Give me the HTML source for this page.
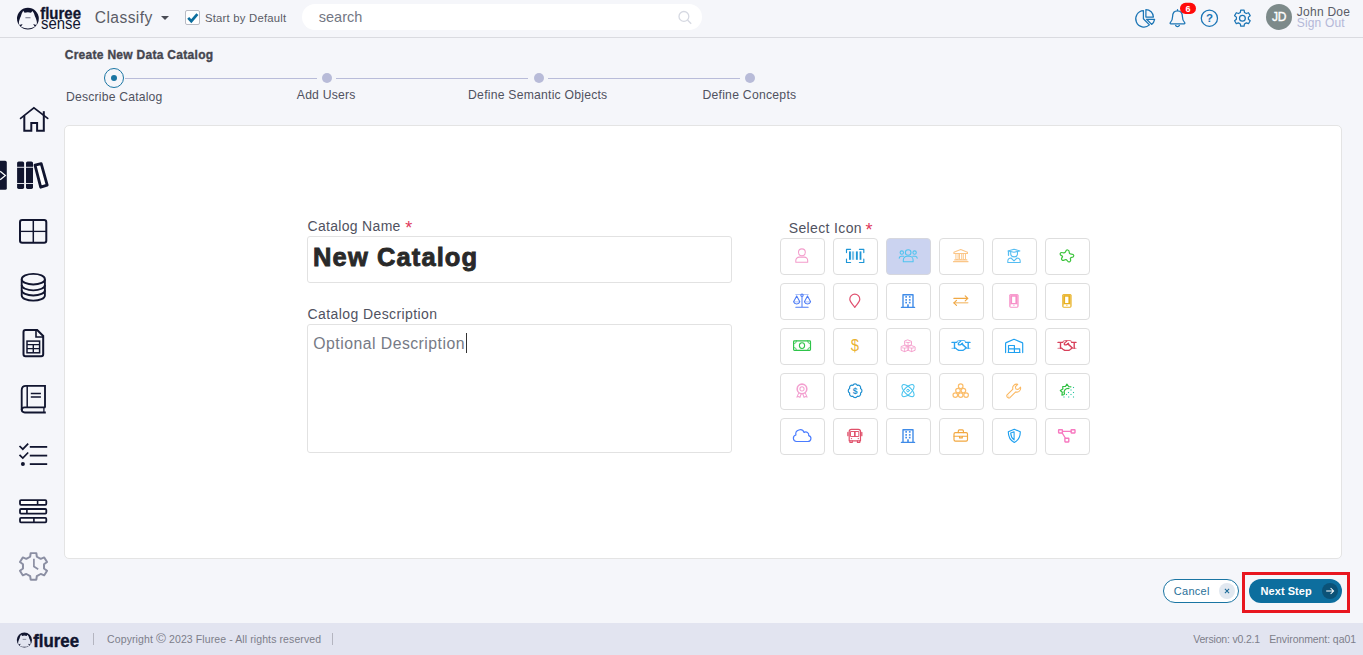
<!DOCTYPE html>
<html lang="en">
<head>
<meta charset="utf-8">
<title>Create New Data Catalog</title>
<style>
*{box-sizing:border-box;margin:0;padding:0}
html,body{width:1363px;height:655px;overflow:hidden}
body{background:#f5f6fa;font-family:"Liberation Sans",sans-serif;color:#50525f;position:relative}
.t{position:absolute;white-space:nowrap;line-height:1}
#header{position:absolute;left:0;top:0;width:1363px;height:38px;border-bottom:1px solid #dadbe0}
#footer{position:absolute;left:0;top:623px;width:1363px;height:32px;background:#e2e4f0}
#card{position:absolute;left:64px;top:125px;width:1278px;height:434px;background:#fff;border:1px solid #e4e4e4;border-radius:5px}
.inp{position:absolute;background:#fff;border:1px solid #e2e2e2;border-radius:3px}
.ic{position:absolute;width:45px;height:37px;border:1px solid #dedede;border-radius:4px;background:#fff}
.ic.sel{background:#cbd3f0;border-color:#d6d7de}
svg{position:absolute;overflow:visible}
.line{position:absolute;height:1px;background:#b9bcd9;top:78px}
.dot{position:absolute;width:10px;height:10px;border-radius:50%;background:#b8bbd8;top:73px}
</style>
</head>
<body>

<div id="header"></div>
<svg style="left:0;top:0;width:1363px;height:655px;pointer-events:none" viewBox="0 0 1363 655"><circle cx="27.9" cy="18.6" r="10.9" fill="#11152f"/><path d="M23.20 10.70 L24.60 12.70 Q27.90 11.90 31.00 12.70 L32.40 10.90 C33.80 12.60 34.50 14.40 34.90 16.30 C35.90 18.40 36.80 20.60 36.90 22.50 C36.90 23.60 36.70 24.40 36.30 25.00 L33.20 24.00 L34.80 26.70 Q27.90 30.10 21.00 26.70 L22.60 24.00 L19.50 25.00 C19.10 24.40 18.90 23.60 18.90 22.50 C19.00 20.60 19.90 18.40 20.90 16.30 C21.30 14.40 22.00 12.60 23.20 10.70Z" fill="#f5f6fa"/><path d="M25.40 17.70 H30.50" stroke="#11152f" stroke-width="1.20" opacity=".5"/><text transform="translate(40.2 18.5) scale(1 1.04)" textLength="40.8" lengthAdjust="spacingAndGlyphs" font-family="Liberation Sans, sans-serif" font-weight="700" font-size="15.6" fill="#11152f" stroke="#11152f" stroke-width=".3">fluree</text><text x="41" y="28.7" textLength="39.7" lengthAdjust="spacingAndGlyphs" font-family="Liberation Sans, sans-serif" font-size="17.2" fill="#11152f">sense</text></svg>
<div class="t" style="left:94.80px;top:10.29px;font-size:15.6px;letter-spacing:0.41px;font-weight:400;color:#5a5c66;">Classify</div>
<div style="position:absolute;left:161px;top:16px;width:0;height:0;border-left:4px solid transparent;border-right:4px solid transparent;border-top:4.5px solid #4a4c55"></div>
<div style="position:absolute;left:185px;top:10px;width:15px;height:15px;background:#fff;border:1px solid #b9bbc4;border-radius:2px"></div>
<svg style="left:187px;top:12px;width:11px;height:11px" viewBox="0 0 11 11"><path d="M1.2 5.9 L4.3 9.2 L10.4 2.2" fill="none" stroke="#0d6e9e" stroke-width="2.7"/></svg>
<div class="t" style="left:204.90px;top:13.13px;font-size:11.3px;letter-spacing:0.23px;font-weight:400;color:#5a5c66;">Start by Default</div>
<div style="position:absolute;left:302px;top:4px;width:400px;height:26px;border-radius:13px;background:#fff"></div>
<div class="t" style="left:318.80px;top:10.33px;font-size:14.5px;letter-spacing:0px;font-weight:400;color:#737784;">search</div>
<svg style="left:676px;top:9px;width:18px;height:18px" viewBox="0 0 18 18"><circle cx="7.9" cy="7.4" r="4.9" fill="none" stroke="#d6d9e2" stroke-width="1.3"/><path d="M11.5 11 L15.2 14.7" stroke="#d6d9e2" stroke-width="1.3" fill="none"/></svg>
<svg style="left:0;top:0;width:1363px;height:655px;pointer-events:none" viewBox="0 0 1363 655"><path d="M1143.4 10.6 A8.2 8.2 0 1 0 1149.4 24.9 L1143.4 18.8 Z" fill="none" stroke="#1b75b5" stroke-width="1.25" stroke-linejoin="round" stroke-linecap="round"/><path d="M1145.9 9.6 V17 H1153.4 A7.6 7.6 0 0 0 1145.9 9.6Z" fill="none" stroke="#1b75b5" stroke-width="1.25" stroke-linejoin="round" stroke-linecap="round"/><path d="M1146.6 19.3 H1154.6 A8 8 0 0 1 1151.6 24.4 Z" fill="none" stroke="#1b75b5" stroke-width="1.25" stroke-linejoin="round" stroke-linecap="round"/><path d="M1177.5 9.6 V10.8 M1177.5 10.8 C1173.8 10.8 1172.6 13.6 1172.6 16.6 C1172.6 20.2 1171.3 21.6 1170.3 22.6 C1169.8 23.2 1170.2 23.9 1170.9 23.9 H1184.1 C1184.8 23.9 1185.2 23.2 1184.7 22.6 C1183.7 21.6 1182.4 20.2 1182.4 16.6 C1182.4 13.6 1181.2 10.8 1177.5 10.8Z" fill="none" stroke="#1b75b5" stroke-width="1.25" stroke-linejoin="round" stroke-linecap="round"/><path d="M1175.6 25.3 A2 2 0 0 0 1179.4 25.3" fill="none" stroke="#1b75b5" stroke-width="1.25" stroke-linejoin="round" stroke-linecap="round"/><rect x="1180" y="2.8" width="16" height="11.2" rx="5.6" fill="#ff0a0a"/><text x="1188" y="11.6" text-anchor="middle" font-family="Liberation Sans, sans-serif" font-weight="700" font-size="9" fill="#fff">6</text><circle cx="1209.4" cy="18.2" r="8.1" fill="none" stroke="#1b75b5" stroke-width="1.25" stroke-linejoin="round" stroke-linecap="round"/><text x="1209.4" y="22.4" text-anchor="middle" font-family="Liberation Sans, sans-serif" font-weight="700" font-size="11.5" fill="#1b75b5">?</text><path d="M1240.33 12.46 L1240.70 10.18 L1244.10 10.18 L1244.47 12.46 L1246.34 13.54 L1248.49 12.71 L1250.20 15.67 L1248.40 17.12 L1248.40 19.28 L1250.20 20.73 L1248.49 23.69 L1246.34 22.86 L1244.47 23.94 L1244.10 26.22 L1240.70 26.22 L1240.33 23.94 L1238.46 22.86 L1236.31 23.69 L1234.60 20.73 L1236.40 19.28 L1236.40 17.12 L1234.60 15.67 L1236.31 12.71 L1238.46 13.54Z" fill="none" stroke="#1b75b5" stroke-width="1.25" stroke-linejoin="round" stroke-linecap="round"/><circle cx="1242.4" cy="18.2" r="2.9" fill="none" stroke="#1b75b5" stroke-width="1.25" stroke-linejoin="round" stroke-linecap="round"/><circle cx="1279" cy="16.9" r="13" fill="#7d8a8a"/><text x="1279.1" y="20.8" text-anchor="middle" font-family="Liberation Sans, sans-serif" font-size="12" fill="#fff" stroke="#fff" stroke-width=".35" letter-spacing="-0.2">JD</text></svg>
<div class="t" style="left:1296.80px;top:5.64px;font-size:12px;letter-spacing:0.246px;font-weight:400;color:#5a5c66;">John Doe</div>
<div class="t" style="left:1296.80px;top:16.84px;font-size:12px;letter-spacing:0.157px;font-weight:400;color:#b4b8d8;">Sign Out</div>
<svg style="left:0;top:0;width:1363px;height:655px;pointer-events:none" viewBox="0 0 1363 655"><path d="M20.6 118.4 L33.9 107.9 L47.7 118.4" fill="none" stroke="#11152f" stroke-width="1.7" stroke-linecap="round"/><path d="M43.8 111.2 V116" fill="none" stroke="#11152f" stroke-width="2.0" stroke-linejoin="miter"/><path d="M24.3 115.6 V130.7 H31.3 V123 H37.1 V130.7 H43.8 V115.4" fill="none" stroke="#11152f" stroke-width="2.0" stroke-linejoin="miter"/><path d="M0 160.8 H5.2 Q6.8 160.8 6.8 162.4 V188.2 Q6.8 189.8 5.2 189.8 H0Z" fill="#11152f"/><path d="M0.2 171.3 L5.4 175.5 L0.2 179.7" fill="none" stroke="#fff" stroke-width="1.2"/><rect x="17.1" y="161.4" width="7" height="27.5" rx="1.6" fill="#11152f"/><rect x="16.900000000000002" y="166.8" width="7.4" height="0.9" fill="#f5f6fa"/><rect x="16.900000000000002" y="183" width="7.4" height="0.9" fill="#f5f6fa"/><rect x="26.0" y="161.4" width="7" height="27.5" rx="1.6" fill="#11152f"/><rect x="25.8" y="166.8" width="7.4" height="0.9" fill="#f5f6fa"/><rect x="25.8" y="183" width="7.4" height="0.9" fill="#f5f6fa"/><path d="M35.0 165.2 L41.2 163.7 L47.2 185.2 L40.7 187.2 Z" fill="#fff" stroke="#11152f" stroke-width="2.8" stroke-linejoin="round"/><rect x="20" y="220.1" width="26.3" height="22.6" rx="2.2" fill="none" stroke="#11152f" stroke-width="2.0" stroke-linejoin="miter"/><path d="M33.3 220.1 V242.7" fill="none" stroke="#11152f" stroke-width="1.5"/><path d="M20 231.4 H46.3" fill="none" stroke="#11152f" stroke-width="1.3"/><ellipse cx="33.3" cy="279.2" rx="11.6" ry="5.3" fill="none" stroke="#11152f" stroke-width="1.85"/><path d="M21.7 279.2 V295.4 A11.6 5.3 0 0 0 44.9 295.4 V279.2" fill="none" stroke="#11152f" stroke-width="1.85"/><path d="M21.7 285 A11.6 5.3 0 0 0 44.9 285" fill="none" stroke="#11152f" stroke-width="1.85"/><path d="M21.7 290.2 A11.6 5.3 0 0 0 44.9 290.2" fill="none" stroke="#11152f" stroke-width="1.85"/><path d="M25.5 330 H37.2 L43.2 336 V354.3 Q43.2 356.3 41.2 356.3 H25.5 Q23.5 356.3 23.5 354.3 V332 Q23.5 330 25.5 330Z" fill="none" stroke="#11152f" stroke-width="2.0" stroke-linejoin="miter"/><path d="M36 330 V337 H43.2" fill="none" stroke="#11152f" stroke-width="1.6"/><rect x="27" y="341.1" width="12.6" height="11.7" fill="none" stroke="#11152f" stroke-width="1.5"/><path d="M27 344.6 H39.6 M27 348.6 H39.6 M33.3 344.6 V352.8" fill="none" stroke="#11152f" stroke-width="1.4"/><path d="M45 407.4 V385.9 H26 Q21.7 385.9 21.7 390.2 V409.6 Q21.7 412.5 24.8 412.5 H45.8" fill="none" stroke="#11152f" stroke-width="1.85"/><path d="M45.4 407.4 H24.6 Q21.7 407.4 21.7 409.9" fill="none" stroke="#11152f" stroke-width="1.85"/><path d="M27.2 385.9 V407.4" fill="none" stroke="#11152f" stroke-width="1.5"/><path d="M43.9 407.4 V412.5" fill="none" stroke="#11152f" stroke-width="1.3"/><path d="M30.8 393.5 H40.9 M30.8 396.9 H40.9" fill="none" stroke="#11152f" stroke-width="1.5"/><path d="M19.5 446.0 L22.8 449.2 L28.2 443.7" fill="none" stroke="#11152f" stroke-width="1.7"/><path d="M19.5 454.8 L22.8 458.0 L28.2 452.5" fill="none" stroke="#11152f" stroke-width="1.7"/><path d="M29.8 446.9 H47.2" fill="none" stroke="#11152f" stroke-width="1.8"/><path d="M29.8 455.6 H47.2" fill="none" stroke="#11152f" stroke-width="1.8"/><path d="M29.8 464.1 H47.2" fill="none" stroke="#11152f" stroke-width="1.8"/><circle cx="22.9" cy="464.1" r="2" fill="#11152f"/><rect x="20" y="500.1" width="26.3" height="4.7" rx="1" fill="#fff" stroke="#11152f" stroke-width="1.8"/><path d="M37.6 500.1 V504.8" stroke="#11152f" stroke-width="1.6"/><rect x="20" y="509" width="26.3" height="4.6" rx="1" fill="#fff" stroke="#11152f" stroke-width="1.8"/><path d="M26.9 509 V513.6" stroke="#11152f" stroke-width="1.6"/><rect x="20" y="517.9" width="26.3" height="4.4" rx="1" fill="#fff" stroke="#11152f" stroke-width="1.8"/><path d="M33.9 517.9 V522.3" stroke="#11152f" stroke-width="1.6"/><path transform="translate(33.5 566.4) scale(1.055 1) translate(-33.5 -566.4)" d="M30.35 556.70 L30.82 553.12 L36.18 553.12 L36.65 556.70 L40.33 558.82 L43.66 557.44 L46.34 562.08 L43.48 564.28 L43.48 568.52 L46.34 570.72 L43.66 575.36 L40.33 573.98 L36.65 576.10 L36.18 579.68 L30.82 579.68 L30.35 576.10 L26.67 573.98 L23.34 575.36 L20.66 570.72 L23.52 568.52 L23.52 564.28 L20.66 562.08 L23.34 557.44 L26.67 558.82Z" fill="none" stroke="#8b8fa3" stroke-width="1.9" stroke-linejoin="round"/><path d="M33.9 558.8 V566.5 L38.2 569.3" fill="none" stroke="#8b8fa3" stroke-width="1.7"/></svg>
<div class="t" style="left:64.70px;top:48.84px;font-size:12px;letter-spacing:0.29px;font-weight:700;color:#45464f;-webkit-text-stroke:0.35px #45464f;">Create New Data Catalog</div>
<div style="position:absolute;left:104px;top:68px;width:20px;height:20px;border-radius:50%;border:1.8px solid #1a75a3"></div>
<div style="position:absolute;left:111px;top:75px;width:6px;height:6px;border-radius:50%;background:#1a75a3"></div>
<div class="line" style="left:125px;width:192px"></div>
<div class="line" style="left:336px;width:192px"></div>
<div class="line" style="left:548px;width:192px"></div>
<div class="dot" style="left:322px"></div>
<div class="dot" style="left:534px"></div>
<div class="dot" style="left:745px"></div>
<div class="t" style="left:66.00px;top:91.17px;font-size:12.2px;letter-spacing:0.19px;font-weight:400;color:#50525f;">Describe Catalog</div>
<div class="t" style="left:296.80px;top:89.17px;font-size:12.2px;letter-spacing:0.21px;font-weight:400;color:#50525f;">Add Users</div>
<div class="t" style="left:468.10px;top:89.17px;font-size:12.2px;letter-spacing:0.227px;font-weight:400;color:#50525f;">Define Semantic Objects</div>
<div class="t" style="left:702.40px;top:89.17px;font-size:12.2px;letter-spacing:0.26px;font-weight:400;color:#50525f;">Define Concepts</div>
<div id="card"></div>
<div class="t" style="left:307.50px;top:218.65px;font-size:14px;letter-spacing:0.31px;font-weight:400;color:#50525f;">Catalog Name</div>
<div class="t" style="left:405.20px;top:219.36px;font-size:18px;letter-spacing:0px;font-weight:400;color:#e0395c;">*</div>
<div class="inp" style="left:307px;top:236px;width:425px;height:47px"></div>
<div class="t" style="left:313.10px;top:245.21px;font-size:25.5px;letter-spacing:1.1px;font-weight:700;color:#292929;-webkit-text-stroke:0.85px #292929;">New Catalog</div>
<div class="t" style="left:307.50px;top:306.95px;font-size:14px;letter-spacing:0.41px;font-weight:400;color:#50525f;">Catalog Description</div>
<div class="inp" style="left:307px;top:324px;width:425px;height:129px"></div>
<div class="t" style="left:313.30px;top:335.83px;font-size:15.8px;letter-spacing:0.47px;font-weight:400;color:#767a85;">Optional Description</div>
<div style="position:absolute;left:466px;top:333px;width:1px;height:20px;background:#333"></div>
<div class="t" style="left:788.70px;top:221.25px;font-size:14px;letter-spacing:0.37px;font-weight:400;color:#50525f;">Select Icon</div>
<div class="t" style="left:865.60px;top:221.46px;font-size:18px;letter-spacing:0px;font-weight:400;color:#e0395c;">*</div>
<div class="ic" style="left:780px;top:238px"></div>
<svg style="left:780px;top:238px;width:45px;height:37px" viewBox="-22.5 -18.5 45 37"><circle cx="-0.6" cy="-4.2" r="3.4" fill="none" stroke="#f39ccb" stroke-width="1.06" stroke-linecap="round" stroke-linejoin="round" /><path d="M-6.7 5.7 V4 A3.4 3.4 0 0 1 -3.3 0.6 H1.8 A3.4 3.4 0 0 1 5.2 4 V5.7 Z" fill="none" stroke="#f39ccb" stroke-width="1.06" stroke-linecap="round" stroke-linejoin="round" /></svg>
<div class="ic" style="left:833px;top:238px"></div>
<svg style="left:833px;top:238px;width:45px;height:37px" viewBox="-22.5 -18.5 45 37"><path d="M-9 -3.9 V-7.2 H-4.9 M3.9 -7.2 H8.3 V-3.9 M8.3 2.7 V6 H3.9 M-4.9 6 H-9 V2.7" fill="none" stroke="#1e96d6" stroke-width="1.17" stroke-linecap="round" stroke-linejoin="round" /><rect x="-6.5" y="-5.1" width="1.9" height="8.4" fill="#1e96d6"/><rect x="-3.6" y="-5.1" width="0.8" height="8.4" fill="#1e96d6" opacity=".8"/><rect x="-2.2" y="-5.1" width="0.8" height="8.4" fill="#1e96d6" opacity=".8"/><rect x="0.4" y="-5.1" width="1.9" height="8.4" fill="#1e96d6"/><rect x="4.1" y="-5.1" width="1.8" height="8.4" fill="#1e96d6"/></svg>
<div class="ic sel" style="left:886px;top:238px"></div>
<svg style="left:886px;top:238px;width:45px;height:37px" viewBox="-22.5 -18.5 45 37"><circle cx="-0.3" cy="-4" r="2.8" fill="none" stroke="#4fc4ef" stroke-width="1.06" stroke-linecap="round" stroke-linejoin="round" /><circle cx="-6.7" cy="-3.9" r="1.7" fill="none" stroke="#4fc4ef" stroke-width="1.06" stroke-linecap="round" stroke-linejoin="round" /><circle cx="6.1" cy="-3.9" r="1.7" fill="none" stroke="#4fc4ef" stroke-width="1.06" stroke-linecap="round" stroke-linejoin="round" /><path d="M-5.2 5.2 V3.6 A3.8 3.8 0 0 1 -1.4 -0.2 H0.8 A3.8 3.8 0 0 1 4.6 3.6 V5.2 Z" fill="none" stroke="#4fc4ef" stroke-width="1.06" stroke-linecap="round" stroke-linejoin="round" /><path d="M-9.3 1.6 A2 2 0 0 1 -7.4 -0.3 H-4.8 M8.7 1.6 A2 2 0 0 0 6.8 -0.3 H4.2" fill="none" stroke="#4fc4ef" stroke-width="1.06" stroke-linecap="round" stroke-linejoin="round" /></svg>
<div class="ic" style="left:939px;top:238px"></div>
<svg style="left:939px;top:238px;width:45px;height:37px" viewBox="-22.5 -18.5 45 37"><path d="M-0.8 -7 L6 -4.2 V-3 H-7.6 V-4.2 Z" fill="none" stroke="#fbc688" stroke-width="1.06" stroke-linecap="round" stroke-linejoin="round" /><rect x="-5.2" y="-3" width="1.8" height="6" fill="none" stroke="#fbc688" stroke-width="0.95" stroke-linecap="round" stroke-linejoin="round" /><rect x="-1.6" y="-3" width="1.8" height="6" fill="none" stroke="#fbc688" stroke-width="0.95" stroke-linecap="round" stroke-linejoin="round" /><rect x="2.2" y="-3" width="1.8" height="6" fill="none" stroke="#fbc688" stroke-width="0.95" stroke-linecap="round" stroke-linejoin="round" /><path d="M-6.8 3.4 H5.4 M-8 5.2 H6.5" fill="none" stroke="#fbc688" stroke-width="1.17" stroke-linecap="round" stroke-linejoin="round" /></svg>
<div class="ic" style="left:992px;top:238px"></div>
<svg style="left:992px;top:238px;width:45px;height:37px" viewBox="-22.5 -18.5 45 37"><path d="M-6.5 -5.6 L-0.5 -7.3 L5.4 -5.6 L-0.5 -4.2 Z" fill="none" stroke="#55bdf2" stroke-width="1.06" stroke-linecap="round" stroke-linejoin="round"  fill="#55bdf2" fill-opacity=".25"/><path d="M-6 -5.4 V-1.2" fill="none" stroke="#55bdf2" stroke-width="1.27" stroke-linecap="round" stroke-linejoin="round" /><path d="M-3.8 -4.6 V-3 A3.4 3.4 0 0 0 3 -3 V-4.6" fill="none" stroke="#55bdf2" stroke-width="1.06" stroke-linecap="round" stroke-linejoin="round" /><path d="M-6.7 6 V4.6 A3.2 3.2 0 0 1 -3.5 1.5 L-0.5 4.4 L2.5 1.5 A3.2 3.2 0 0 1 5.7 4.6 V6 Z" fill="none" stroke="#55bdf2" stroke-width="1.06" stroke-linecap="round" stroke-linejoin="round" /></svg>
<div class="ic" style="left:1045px;top:238px"></div>
<svg style="left:1045px;top:238px;width:45px;height:37px" viewBox="-22.5 -18.5 45 37"><path d="M-1.85 -4.95 Q-1.24 -6.79 0.24 -6.54 Q1.72 -6.29 1.71 -4.37 Q1.70 -2.45 3.93 -2.43 Q6.16 -2.42 6.27 -0.92 Q6.38 0.58 4.36 0.87 Q2.34 1.17 2.98 2.83 Q3.63 4.49 2.32 5.22 Q1.01 5.94 -0.15 4.21 Q-1.31 2.48 -2.99 3.50 Q-4.66 4.53 -5.58 3.34 Q-6.51 2.16 -5.38 1.04 Q-4.26 -0.08 -6.04 -0.90 Q-7.83 -1.72 -7.25 -3.10 Q-6.67 -4.49 -4.57 -3.80 Q-2.46 -3.12 -1.85 -4.95 Z" fill="none" stroke="#3cc43c" stroke-width="1.17" stroke-linecap="round" stroke-linejoin="round" /></svg>
<div class="ic" style="left:780px;top:283px"></div>
<svg style="left:780px;top:283px;width:45px;height:37px" viewBox="-22.5 -18.5 45 37"><path d="M-6.7 -7 H5.7" fill="none" stroke="#4d7cf5" stroke-width="1.06" stroke-linecap="round" stroke-linejoin="round"  opacity=".45"/><circle cx="-0.5" cy="-6.3" r="1.2" fill="none" stroke="#4d7cf5" stroke-width="1.06" stroke-linecap="round" stroke-linejoin="round" /><path d="M-0.5 -5 V5.6 M-6.7 5.7 H5.7" fill="none" stroke="#4d7cf5" stroke-width="1.01" stroke-linecap="round" stroke-linejoin="round" /><path d="M-5.8 -5.6 L-8.9 0.2 A3.2 3 0 0 0 -2.6999999999999997 0.2 Z" fill="none" stroke="#4d7cf5" stroke-width="1.06" stroke-linecap="round" stroke-linejoin="round" /><path d="M-8.9 0.4 H-2.6999999999999997" fill="none" stroke="#4d7cf5" stroke-width="0.95" stroke-linecap="round" stroke-linejoin="round"  opacity=".5"/><path d="M5.0 -5.6 L1.9 0.2 A3.2 3 0 0 0 8.1 0.2 Z" fill="none" stroke="#4d7cf5" stroke-width="1.06" stroke-linecap="round" stroke-linejoin="round" /><path d="M1.9 0.4 H8.1" fill="none" stroke="#4d7cf5" stroke-width="0.95" stroke-linecap="round" stroke-linejoin="round"  opacity=".5"/></svg>
<div class="ic" style="left:833px;top:283px"></div>
<svg style="left:833px;top:283px;width:45px;height:37px" viewBox="-22.5 -18.5 45 37"><path d="M-0.7 6 C-2.8 2.8 -5.7 0.6 -5.7 -2.3 A5 5 0 0 1 4.3 -2.3 C4.3 0.6 1.4 2.8 -0.7 6 Z" fill="none" stroke="#e0506f" stroke-width="1.17" stroke-linecap="round" stroke-linejoin="round" /></svg>
<div class="ic" style="left:886px;top:283px"></div>
<svg style="left:886px;top:283px;width:45px;height:37px" viewBox="-22.5 -18.5 45 37"><path d="M-5.5 5.9 V-6.8 H4.5 V5.9" fill="none" stroke="#3f8be8" stroke-width="1.38" stroke-linecap="round" stroke-linejoin="round" /><path d="M-7.1 5.9 H6.1" fill="none" stroke="#3f8be8" stroke-width="1.27" stroke-linecap="round" stroke-linejoin="round" /><rect x="-3.2" y="-5.3999999999999995" width="1.7" height="1.6" fill="#3f8be8"/><rect x="-3.2" y="-2.4000000000000004" width="1.7" height="1.6" fill="#3f8be8"/><rect x="-3.2" y="0.30000000000000004" width="1.7" height="1.6" fill="#3f8be8"/><rect x="0.3999999999999999" y="-5.3999999999999995" width="1.7" height="1.6" fill="#3f8be8"/><rect x="0.3999999999999999" y="-2.4000000000000004" width="1.7" height="1.6" fill="#3f8be8"/><rect x="0.3999999999999999" y="0.30000000000000004" width="1.7" height="1.6" fill="#3f8be8"/><rect x="-1.3" y="2.8" width="1.6" height="3.1" fill="#3f8be8"/></svg>
<div class="ic" style="left:939px;top:283px"></div>
<svg style="left:939px;top:283px;width:45px;height:37px" viewBox="-22.5 -18.5 45 37"><path d="M-7.6 -3.1 H6.3 M3.7 -5.6 L6.3 -3.1 L3.7 -0.6" fill="none" stroke="#f0a844" stroke-width="1.17" stroke-linecap="round" stroke-linejoin="round" /><path d="M6.3 1.3 H-7.6" fill="none" stroke="#f0a844" stroke-width="1.38" stroke-linecap="round" stroke-linejoin="round"  opacity=".6"/><path d="M-5 -1.2 L-7.6 1.3 L-5 3.8" fill="none" stroke="#f0a844" stroke-width="1.17" stroke-linecap="round" stroke-linejoin="round" /></svg>
<div class="ic" style="left:992px;top:283px"></div>
<svg style="left:992px;top:283px;width:45px;height:37px" viewBox="-22.5 -18.5 45 37"><rect x="-5.3" y="-7.5" width="9.4" height="13.7" rx="1.6" fill="#f78fc8"/><rect x="-2.4" y="-4.8" width="3.3" height="6.3" fill="#fff"/><rect x="-3.9" y="2.7" width="6.6" height="2.5" rx=".5" fill="#fff"/><rect x="-4.3" y="-6.5" width="7.4" height="11.7" rx="1" fill="none" stroke="#fff" stroke-width=".35" opacity=".7"/><circle cx="-0.6" cy="3.7" r=".6" fill="#f78fc8"/></svg>
<div class="ic" style="left:1045px;top:283px"></div>
<svg style="left:1045px;top:283px;width:45px;height:37px" viewBox="-22.5 -18.5 45 37"><rect x="-5.3" y="-7.5" width="9.4" height="13.7" rx="1.6" fill="#e8b020"/><rect x="-2.4" y="-4.8" width="3.3" height="6.3" fill="#fff"/><rect x="-3.9" y="2.7" width="6.6" height="2.5" rx=".5" fill="#fff"/><rect x="-4.3" y="-6.5" width="7.4" height="11.7" rx="1" fill="none" stroke="#fff" stroke-width=".35" opacity=".7"/><circle cx="-0.6" cy="3.7" r=".6" fill="#e8b020"/></svg>
<div class="ic" style="left:780px;top:328px"></div>
<svg style="left:780px;top:328px;width:45px;height:37px" viewBox="-22.5 -18.5 45 37"><rect x="-8.9" y="-5.7" width="16.9" height="9.5" rx=".9" fill="none" stroke="#2ec44a" stroke-width="1.17" stroke-linecap="round" stroke-linejoin="round" /><ellipse cx="-0.5" cy="-0.9" rx="2.6" ry="2.9" fill="none" stroke="#2ec44a" stroke-width="1.11" stroke-linecap="round" stroke-linejoin="round" /><path d="M-5.9 -5.7 A3 3 0 0 1 -8.9 -2.7 M5 -5.7 A3 3 0 0 0 8 -2.7 M-8.9 0.8 A3 3 0 0 1 -5.9 3.8 M8 0.8 A3 3 0 0 0 5 3.8" fill="none" stroke="#2ec44a" stroke-width="0.8" stroke-linecap="round" stroke-linejoin="round" /></svg>
<div class="ic" style="left:833px;top:328px"></div>
<svg style="left:833px;top:328px;width:45px;height:37px" viewBox="-22.5 -18.5 45 37"><text x="-0.6" y="4.5" text-anchor="middle" font-family="Liberation Sans, sans-serif" font-size="16.5" fill="#e8ac1c" fill-opacity=".92" transform="translate(-0.6 0) scale(.9 1) translate(0.6 0)">$</text></svg>
<div class="ic" style="left:886px;top:328px"></div>
<svg style="left:886px;top:328px;width:45px;height:37px" viewBox="-22.5 -18.5 45 37"><path d="M-0.45 -6.5 L3.0 -5.2 V-1.8 L-0.45 -0.5 L-3.9000000000000004 -1.8 V-5.2 Z" fill="none" stroke="#f49ac9" stroke-width="0.9" stroke-linecap="round" stroke-linejoin="round" /><path d="M-2.6000000000000005 -4.3 L-0.45 -3.9 L1.7 -4.3 M-0.45 -3.9 V-0.5" fill="none" stroke="#f49ac9" stroke-width="0.8" stroke-linecap="round" stroke-linejoin="round" /><path d="M-3.9 -0.8999999999999999 L-0.44999999999999973 0.40000000000000013 V3.8 L-3.9 5.1 L-7.35 3.8 V0.40000000000000013 Z" fill="none" stroke="#f49ac9" stroke-width="0.9" stroke-linecap="round" stroke-linejoin="round" /><path d="M-6.05 1.3000000000000003 L-3.9 1.7000000000000002 L-1.7499999999999998 1.3000000000000003 M-3.9 1.7000000000000002 V5.1" fill="none" stroke="#f49ac9" stroke-width="0.8" stroke-linecap="round" stroke-linejoin="round" /><path d="M3.15 -0.8999999999999999 L6.6 0.40000000000000013 V3.8 L3.15 5.1 L-0.30000000000000027 3.8 V0.40000000000000013 Z" fill="none" stroke="#f49ac9" stroke-width="0.9" stroke-linecap="round" stroke-linejoin="round" /><path d="M0.9999999999999998 1.3000000000000003 L3.15 1.7000000000000002 L5.3 1.3000000000000003 M3.15 1.7000000000000002 V5.1" fill="none" stroke="#f49ac9" stroke-width="0.8" stroke-linecap="round" stroke-linejoin="round" /></svg>
<div class="ic" style="left:939px;top:328px"></div>
<svg style="left:939px;top:328px;width:45px;height:37px" viewBox="-22.5 -18.5 45 37"><path d="M-9.5 -4.1 H-4.9 M-7 -4.1 V1.8 M4.3 -4.1 H8.5 M6.7 -4.1 V1.8" fill="none" stroke="#2aa3f0" stroke-width="1.38" stroke-linecap="round" stroke-linejoin="round" /><path d="M-9.5 1.8 H-6 M5.5 1.8 H8.5" fill="none" stroke="#2aa3f0" stroke-width="1.27" stroke-linecap="round" stroke-linejoin="round"  opacity=".55"/><path d="M-4.9 -4.1 L-3.6 -5.6 Q-3 -6 -1.8 -6 H2.4 Q3.2 -6 3.6 -5.2 L4.3 -4.1" fill="none" stroke="#2aa3f0" stroke-width="1.06" stroke-linecap="round" stroke-linejoin="round"  opacity=".75"/><path d="M-0.8 -5.3 C-2.4 -4.2 -3.6 -3 -3.1 -2.2 C-2.4 -1.1 -0.8 -1.5 1 -3.3" fill="none" stroke="#2aa3f0" stroke-width="1.38" stroke-linecap="round" stroke-linejoin="round" /><path d="M0.4 -2.6 L4.6 1.3" fill="none" stroke="#2aa3f0" stroke-width="1.48" stroke-linecap="round" stroke-linejoin="round" /><path d="M-6 1.6 L-4.6 2.7 L-2.8 3.9 H1.4 L2.8 3 L4.6 1.5" fill="none" stroke="#2aa3f0" stroke-width="1.27" stroke-linecap="round" stroke-linejoin="round" /></svg>
<div class="ic" style="left:992px;top:328px"></div>
<svg style="left:992px;top:328px;width:45px;height:37px" viewBox="-22.5 -18.5 45 37"><path d="M-8.9 6.1 V-3 Q-8.9 -3.6 -8.3 -3.9 L-0.5 -7.2 L7.6 -3.9 Q8.2 -3.6 8.2 -3 V6.1" fill="none" stroke="#1ea0f0" stroke-width="1.17" stroke-linecap="round" stroke-linejoin="round" /><path d="M-6 6 V-1 H-0.1 V6 M-6 2.3 H5.2 V6 M-6.4 6 H5.6" fill="none" stroke="#1ea0f0" stroke-width="1.17" stroke-linecap="round" stroke-linejoin="round" /></svg>
<div class="ic" style="left:1045px;top:328px"></div>
<svg style="left:1045px;top:328px;width:45px;height:37px" viewBox="-22.5 -18.5 45 37"><path d="M-9.5 -4.1 H-4.9 M-7 -4.1 V1.8 M4.3 -4.1 H8.5 M6.7 -4.1 V1.8" fill="none" stroke="#d8405a" stroke-width="1.38" stroke-linecap="round" stroke-linejoin="round" /><path d="M-9.5 1.8 H-6 M5.5 1.8 H8.5" fill="none" stroke="#d8405a" stroke-width="1.27" stroke-linecap="round" stroke-linejoin="round"  opacity=".55"/><path d="M-4.9 -4.1 L-3.6 -5.6 Q-3 -6 -1.8 -6 H2.4 Q3.2 -6 3.6 -5.2 L4.3 -4.1" fill="none" stroke="#d8405a" stroke-width="1.06" stroke-linecap="round" stroke-linejoin="round"  opacity=".75"/><path d="M-0.8 -5.3 C-2.4 -4.2 -3.6 -3 -3.1 -2.2 C-2.4 -1.1 -0.8 -1.5 1 -3.3" fill="none" stroke="#d8405a" stroke-width="1.38" stroke-linecap="round" stroke-linejoin="round" /><path d="M0.4 -2.6 L4.6 1.3" fill="none" stroke="#d8405a" stroke-width="1.48" stroke-linecap="round" stroke-linejoin="round" /><path d="M-6 1.6 L-4.6 2.7 L-2.8 3.9 H1.4 L2.8 3 L4.6 1.5" fill="none" stroke="#d8405a" stroke-width="1.27" stroke-linecap="round" stroke-linejoin="round" /></svg>
<div class="ic" style="left:780px;top:373px"></div>
<svg style="left:780px;top:373px;width:45px;height:37px" viewBox="-22.5 -18.5 45 37"><circle cx="-0.5" cy="-2.6" r="4.8" fill="none" stroke="#f3a0d0" stroke-width="1.59" stroke-linecap="round" stroke-linejoin="round" /><circle cx="-0.5" cy="-2.6" r="2.1" fill="none" stroke="#f3a0d0" stroke-width="1.06" stroke-linecap="round" stroke-linejoin="round" /><path d="M-3.8 1.6 L-5.6 5.6 L-3.6 5 L-2.6 6 L-1.4 2.6 M2.8 1.6 L4.6 5.6 L2.6 5 L1.6 6 L0.4 2.6" fill="none" stroke="#f3a0d0" stroke-width="1.06" stroke-linecap="round" stroke-linejoin="round" /></svg>
<div class="ic" style="left:833px;top:373px"></div>
<svg style="left:833px;top:373px;width:45px;height:37px" viewBox="-22.5 -18.5 45 37"><path d="M-2.64 -6.10 A2.45 2.45 0 0 1 1.84 -6.10 A2.45 2.45 0 0 1 5.00 -2.94 A2.45 2.45 0 0 1 5.00 1.54 A2.45 2.45 0 0 1 1.84 4.70 A2.45 2.45 0 0 1 -2.64 4.70 A2.45 2.45 0 0 1 -5.80 1.54 A2.45 2.45 0 0 1 -5.80 -2.94 A2.45 2.45 0 0 1 -2.64 -6.10 Z" fill="none" stroke="#1f8fd0" stroke-width="1.17" stroke-linecap="round" stroke-linejoin="round" /><text x="-0.4" y="2.3" text-anchor="middle" font-family="Liberation Sans, sans-serif" font-weight="700" font-size="8.6" fill="#1f8fd0">$</text></svg>
<div class="ic" style="left:886px;top:373px"></div>
<svg style="left:886px;top:373px;width:45px;height:37px" viewBox="-22.5 -18.5 45 37"><ellipse cx="-0.5" cy="-0.9" rx="7.9" ry="3.5" transform="rotate(45 -0.5 -0.9)" fill="none" stroke="#45c2ee" stroke-width="1.06" stroke-linecap="round" stroke-linejoin="round" /><ellipse cx="-0.5" cy="-0.9" rx="7.9" ry="3.5" transform="rotate(-45 -0.5 -0.9)" fill="none" stroke="#45c2ee" stroke-width="1.06" stroke-linecap="round" stroke-linejoin="round" /><circle cx="-0.5" cy="-0.9" r="1.3" fill="none" stroke="#45c2ee" stroke-width="0.95" stroke-linecap="round" stroke-linejoin="round" /></svg>
<div class="ic" style="left:939px;top:373px"></div>
<svg style="left:939px;top:373px;width:45px;height:37px" viewBox="-22.5 -18.5 45 37"><circle cx="-0.8" cy="-5.3" r="2.3" fill="none" stroke="#fbbd6a" stroke-width="1.17" stroke-linecap="round" stroke-linejoin="round" /><circle cx="-3.5" cy="-0.9" r="2.3" fill="none" stroke="#fbbd6a" stroke-width="1.17" stroke-linecap="round" stroke-linejoin="round" /><circle cx="1.9" cy="-0.9" r="2.3" fill="none" stroke="#fbbd6a" stroke-width="1.17" stroke-linecap="round" stroke-linejoin="round" /><circle cx="-6.2" cy="3.6" r="2.3" fill="none" stroke="#fbbd6a" stroke-width="1.17" stroke-linecap="round" stroke-linejoin="round" /><circle cx="-0.8" cy="3.6" r="2.3" fill="none" stroke="#fbbd6a" stroke-width="1.17" stroke-linecap="round" stroke-linejoin="round" /><circle cx="4.6" cy="3.6" r="2.3" fill="none" stroke="#fbbd6a" stroke-width="1.17" stroke-linecap="round" stroke-linejoin="round" /></svg>
<div class="ic" style="left:992px;top:373px"></div>
<svg style="left:992px;top:373px;width:45px;height:37px" viewBox="-22.5 -18.5 45 37"><path d="M-6.6 6 A1.7 1.7 0 0 1 -7.4 3.4 L-1.6 -2.4 C-2.6 -5.4 0.2 -8 3.2 -7.2 L0.8 -4.6 L1.4 -2.6 L3.6 -2 L6 -4.4 C6.8 -1.4 4.2 1.4 1.2 0.4 L-4.6 6.2 A1.7 1.7 0 0 1 -6.6 6 Z" fill="none" stroke="#fbb860" stroke-width="1.06" stroke-linecap="round" stroke-linejoin="round" /><circle cx="-5.6" cy="4.6" r=".5" fill="#fbb860"/></svg>
<div class="ic" style="left:1045px;top:373px"></div>
<svg style="left:1045px;top:373px;width:45px;height:37px" viewBox="-22.5 -18.5 45 37"><path d="M3.4 -4.6 L1.2 -5 L-0.6 -7.4 L-2 -5 L-4.8 -5 L-4.6 -2.4 L-7.2 -1 L-5.2 0.8 L-5.6 3.6 L-3.8 3.2" fill="none" stroke="#2fc040" stroke-width="1.17" stroke-linecap="round" stroke-linejoin="round" /><path d="M-3 2.6 C-4.4 -0.6 -2 -3.4 1.4 -3" fill="none" stroke="#2fc040" stroke-width="1.27" stroke-linecap="round" stroke-linejoin="round" /><rect x="5.45" y="-4.55" width="1.1" height="1.1" fill="#22c3a0"/><rect x="2.95" y="-2.05" width="1.1" height="1.1" fill="#22c3a0"/><rect x="0.44999999999999996" y="0.44999999999999996" width="1.1" height="1.1" fill="#22c3a0"/><rect x="5.45" y="0.44999999999999996" width="1.1" height="1.1" fill="#22c3a0"/><rect x="-1.55" y="2.45" width="1.1" height="1.1" fill="#22c3a0"/><rect x="2.95" y="2.45" width="1.1" height="1.1" fill="#22c3a0"/><rect x="-4.05" y="4.95" width="1.1" height="1.1" fill="#22c3a0"/><rect x="0.6499999999999999" y="4.95" width="1.1" height="1.1" fill="#22c3a0"/><rect x="5.45" y="4.95" width="1.1" height="1.1" fill="#22c3a0"/></svg>
<div class="ic" style="left:780px;top:418px"></div>
<svg style="left:780px;top:418px;width:45px;height:37px" viewBox="-22.5 -18.5 45 37"><path d="M-6 5 A3.3 3.3 0 0 1 -6.6 -1.5 A4.3 4.3 0 0 1 1.6 -4 A3 3 0 0 1 6.2 -0.9 A3 3 0 0 1 5.4 5 Z" fill="none" stroke="#4a7cff" stroke-width="1.17" stroke-linecap="round" stroke-linejoin="round" /></svg>
<div class="ic" style="left:833px;top:418px"></div>
<svg style="left:833px;top:418px;width:45px;height:37px" viewBox="-22.5 -18.5 45 37"><path d="M-6.3 4.3 V-5 Q-6.3 -7.2 -4.1 -7.2 H2.8 Q5 -7.2 5 -5 V4.3 Z" fill="none" stroke="#e0506a" stroke-width="1.17" stroke-linecap="round" stroke-linejoin="round" /><path d="M-4.6 -5 H3.3 V0 H-4.6 Z M-1 -5 V0 M-0.3 -5 V0" fill="none" stroke="#e0506a" stroke-width="0.95" stroke-linecap="round" stroke-linejoin="round" /><path d="M-7.6 -4 V-0.8 M6.3 -4 V-0.8" fill="none" stroke="#e0506a" stroke-width="1.27" stroke-linecap="round" stroke-linejoin="round" /><path d="M-5.6 4.3 V6 H-3.2 V4.3 M1.9 4.3 V6 H4.3 V4.3" fill="none" stroke="#e0506a" stroke-width="1.06" stroke-linecap="round" stroke-linejoin="round" /><circle cx="-4" cy="2.1" r=".7" fill="#e0506a"/><circle cx="2.8" cy="2.1" r=".7" fill="#e0506a"/></svg>
<div class="ic" style="left:886px;top:418px"></div>
<svg style="left:886px;top:418px;width:45px;height:37px" viewBox="-22.5 -18.5 45 37"><path d="M-5.5 5.9 V-6.8 H4.5 V5.9" fill="none" stroke="#3f8be8" stroke-width="1.38" stroke-linecap="round" stroke-linejoin="round" /><path d="M-7.1 5.9 H6.1" fill="none" stroke="#3f8be8" stroke-width="1.27" stroke-linecap="round" stroke-linejoin="round" /><rect x="-3.2" y="-5.3999999999999995" width="1.7" height="1.6" fill="#3f8be8"/><rect x="-3.2" y="-2.4000000000000004" width="1.7" height="1.6" fill="#3f8be8"/><rect x="-3.2" y="0.30000000000000004" width="1.7" height="1.6" fill="#3f8be8"/><rect x="0.3999999999999999" y="-5.3999999999999995" width="1.7" height="1.6" fill="#3f8be8"/><rect x="0.3999999999999999" y="-2.4000000000000004" width="1.7" height="1.6" fill="#3f8be8"/><rect x="0.3999999999999999" y="0.30000000000000004" width="1.7" height="1.6" fill="#3f8be8"/><rect x="-1.3" y="2.8" width="1.6" height="3.1" fill="#3f8be8"/></svg>
<div class="ic" style="left:939px;top:418px"></div>
<svg style="left:939px;top:418px;width:45px;height:37px" viewBox="-22.5 -18.5 45 37"><rect x="-7.5" y="-3.9" width="13.5" height="8.5" rx="1.4" fill="none" stroke="#f2a840" stroke-width="1.17" stroke-linecap="round" stroke-linejoin="round" /><path d="M-3.2 -3.9 V-5.6 Q-3.2 -6.6 -2.2 -6.6 H0.9 Q1.9 -6.6 1.9 -5.6 V-3.9" fill="none" stroke="#f2a840" stroke-width="1.17" stroke-linecap="round" stroke-linejoin="round" /><path d="M-7.5 -0.2 H6 M-2 -0.2 V1.4 H0.8 V-0.2" fill="none" stroke="#f2a840" stroke-width="1.06" stroke-linecap="round" stroke-linejoin="round" /></svg>
<div class="ic" style="left:992px;top:418px"></div>
<svg style="left:992px;top:418px;width:45px;height:37px" viewBox="-22.5 -18.5 45 37"><path d="M-0.2 -7.2 L5.8 -4.8 C5.8 0.4 3.6 4 -0.2 5.9 C-4 4 -6.2 0.4 -6.2 -4.8 Z" fill="none" stroke="#1ea0f0" stroke-width="1.17" stroke-linecap="round" stroke-linejoin="round" /><path d="M-0.4 -4.8 L-3.8 -3.4 C-3.6 -0.4 -2.6 1.8 -0.4 3.4 Z" fill="none" stroke="#1ea0f0" stroke-width="1.06" stroke-linecap="round" stroke-linejoin="round"  fill="#1ea0f0" fill-opacity=".3"/></svg>
<div class="ic" style="left:1045px;top:418px"></div>
<svg style="left:1045px;top:418px;width:45px;height:37px" viewBox="-22.5 -18.5 45 37"><rect x="-8.9" y="-6.7" width="3.8" height="3.2" rx=".4" fill="none" stroke="#f778c0" stroke-width="1.38" stroke-linecap="round" stroke-linejoin="round" /><rect x="3.6" y="-6.7" width="3.9" height="3.2" rx=".4" fill="none" stroke="#f778c0" stroke-width="1.38" stroke-linecap="round" stroke-linejoin="round" /><rect x="-2.6" y="1.7" width="3.9" height="3.8" rx=".4" fill="none" stroke="#f778c0" stroke-width="1.38" stroke-linecap="round" stroke-linejoin="round" /><path d="M-5 -5.1 H3.6 M-5.2 -3.4 L-2.2 1.5" fill="none" stroke="#f778c0" stroke-width="1.27" stroke-linecap="round" stroke-linejoin="round" /></svg>
<div style="position:absolute;left:1163px;top:579px;width:76px;height:24px;border-radius:12px;background:#fff;border:1px solid #1a75a3"></div>
<div class="t" style="left:1173.80px;top:586.19px;font-size:11px;letter-spacing:0.28px;font-weight:400;color:#2a6f98;">Cancel</div>
<div style="position:absolute;left:1219px;top:583px;width:16px;height:16px;border-radius:50%;background:#e1e8f0"></div>
<svg style="left:1223px;top:587px;width:8px;height:8px" viewBox="0 0 8 8"><path d="M1.9 1.9 L6.1 6.1 M6.1 1.9 L1.9 6.1" stroke="#1a6a98" stroke-width="1.05" fill="none"/></svg>
<div style="position:absolute;left:1242px;top:572px;width:108px;height:41px;border:3px solid #e8161f"></div>
<div style="position:absolute;left:1249px;top:579px;width:93px;height:24px;border-radius:12px;background:#0d6e9e"></div>
<div class="t" style="left:1260.60px;top:586.19px;font-size:11px;letter-spacing:0.04px;font-weight:700;color:#fff;">Next Step</div>
<div style="position:absolute;left:1322px;top:583px;width:16px;height:16px;border-radius:50%;background:#0b5277"></div>
<svg style="left:1325px;top:586px;width:10px;height:10px" viewBox="0 0 10 10"><path d="M1.2 5 H8.4 M5.6 2 L8.6 5 L5.6 8" stroke="#fff" stroke-width="1.05" fill="none"/></svg>
<div id="footer"></div>
<svg style="left:0;top:0;width:1363px;height:655px;pointer-events:none" viewBox="0 0 1363 655"><circle cx="24.4" cy="640" r="7.6" fill="#11152f"/><path d="M21.12 634.49 L22.10 635.89 Q24.40 635.33 26.56 635.89 L27.54 634.63 C28.51 635.82 29.00 637.07 29.28 638.40 C29.98 639.86 30.61 641.39 30.68 642.72 C30.68 643.49 30.54 644.04 30.26 644.46 L28.10 643.77 L29.21 645.65 Q24.40 648.02 19.59 645.65 L20.70 643.77 L18.54 644.46 C18.26 644.04 18.12 643.49 18.12 642.72 C18.19 641.39 18.82 639.86 19.52 638.40 C19.80 637.07 20.29 635.82 21.12 634.49Z" fill="#e2e4f0"/><path d="M22.66 639.37 H26.21" stroke="#11152f" stroke-width="0.84" opacity=".5"/><text transform="translate(33.2 646.8) scale(1 1.09)" textLength="45.8" lengthAdjust="spacingAndGlyphs" font-family="Liberation Sans, sans-serif" font-weight="700" font-size="16.6" fill="#11152f" stroke="#11152f" stroke-width=".4">fluree</text></svg>
<div style="position:absolute;left:93px;top:633px;width:1px;height:12px;background:#b4b5c0"></div>
<div class="t" style="left:107.10px;top:633.61px;font-size:10.5px;letter-spacing:0.1px;font-weight:400;color:#7d7e8a;">Copyright <span style="font-size:13.5px;line-height:0;position:relative;top:.6px">&copy;</span> 2023 Fluree - All rights reserved</div>
<div style="position:absolute;left:332px;top:633px;width:1px;height:12px;background:#b4b5c0"></div>
<div class="t" style="left:1193.20px;top:633.71px;font-size:10.5px;letter-spacing:-0.18px;font-weight:400;color:#7d7e8a;">Version: v0.2.1</div>
<div class="t" style="left:1269.20px;top:633.71px;font-size:10.5px;letter-spacing:-0.084px;font-weight:400;color:#7d7e8a;">Environment: qa01</div>
</body>
</html>
